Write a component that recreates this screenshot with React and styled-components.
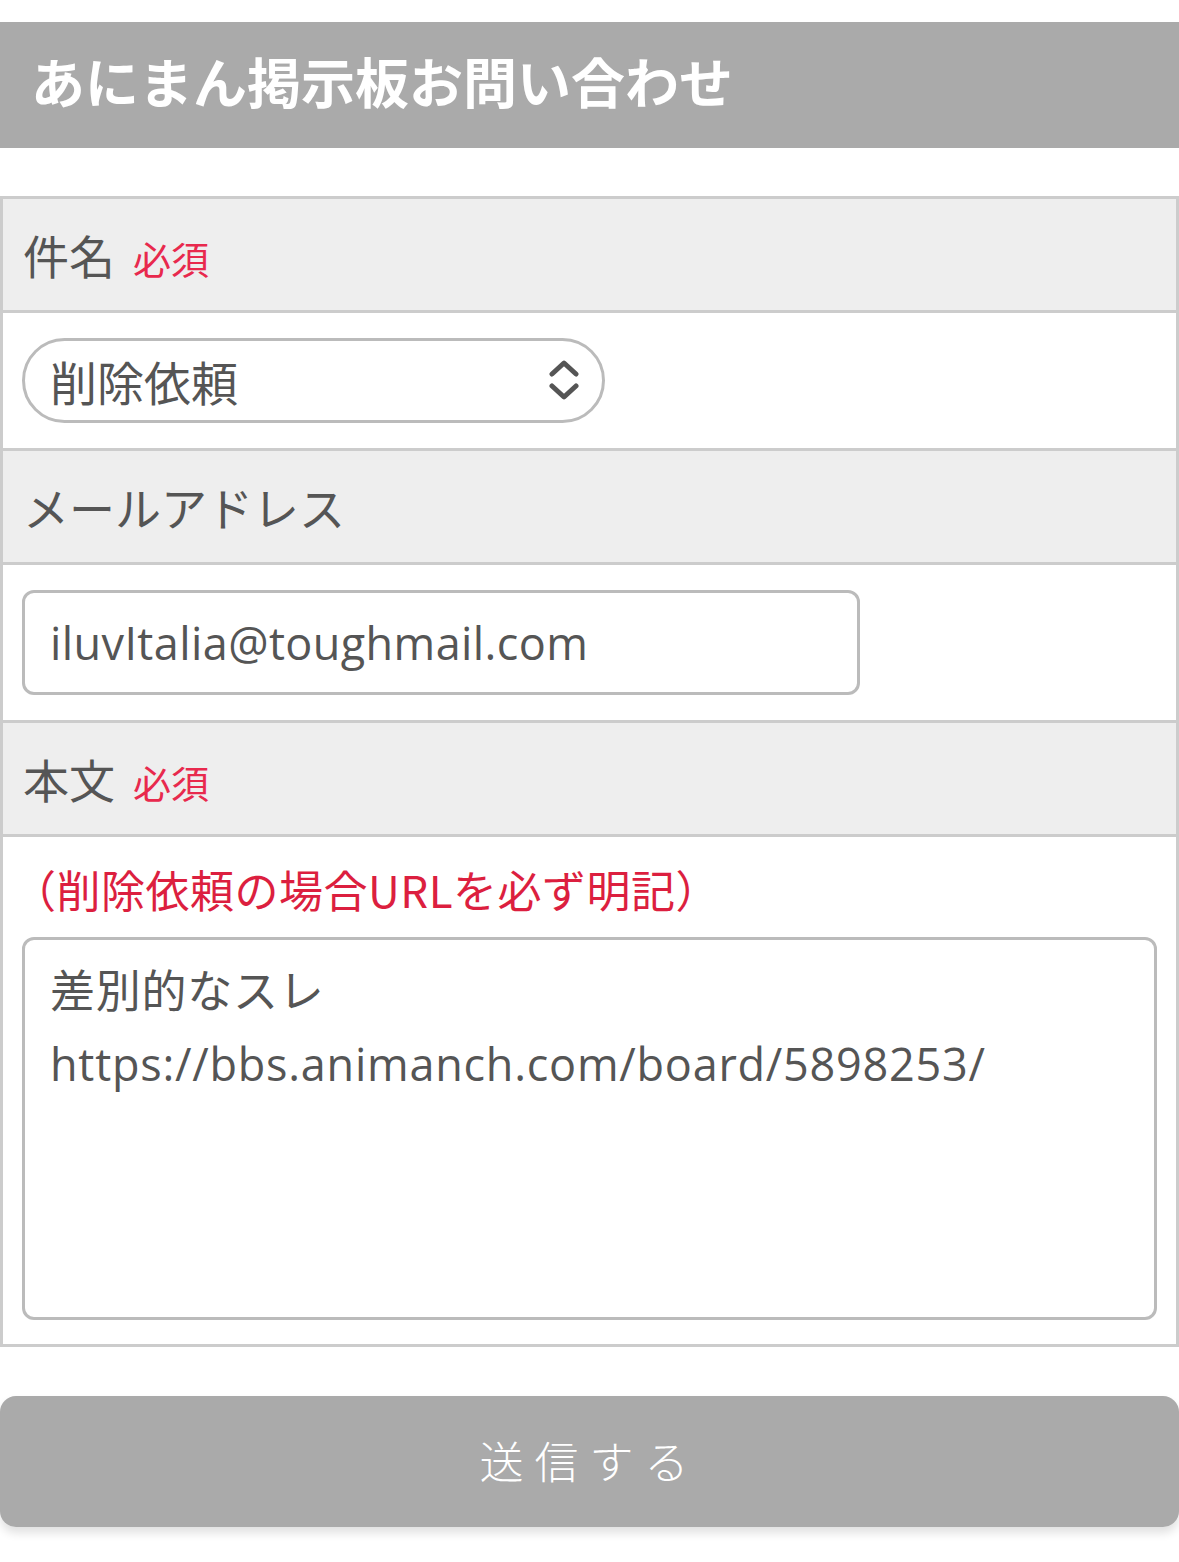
import React from 'react';
import styled, { createGlobalStyle } from 'styled-components';

const GlobalStyle = createGlobalStyle`
  html, body {
    margin: 0;
    padding: 0;
    background: #fff;
  }
  body {
    font-family: "Open Sans", "Noto Sans CJK JP", sans-serif;
    color: #555;
  }
`;

const Page = styled.div`
  width: 1179px;
  padding-top: 22px;
  padding-bottom: 30px;
`;

const TitleBar = styled.h1`
  margin: 0;
  height: 126px;
  box-sizing: border-box;
  display: flex;
  align-items: center;
  padding: 0 0 10px 31px;
  background: #aaa;
  color: #fff;
  font-family: "Noto Sans CJK JP", sans-serif;
  font-size: 54px;
  font-weight: 700;
`;

const FormTable = styled.div`
  margin-top: 48px;
  border: 3px solid #ccc;
  display: flex;
  flex-direction: column;
`;

const Head = styled.div`
  height: 111px;
  background: #eee;
  display: flex;
  align-items: baseline;
  padding: 0 20px;
  line-height: 111px;
  font-family: "Noto Sans CJK JP", sans-serif;
  font-size: 46px;
  color: #555;
  border-bottom: 3px solid #ccc;
`;

const Required = styled.span`
  margin-left: 18px;
  font-size: 38px;
  color: #e8294d;
`;

const Body = styled.div`
  background: #fff;
  padding: ${(p) => p.$pad || '25px 19px'};
  border-bottom: ${(p) => (p.$last ? 'none' : '3px solid #ccc')};
`;

const SelectWrap = styled.div`
  position: relative;
  width: 583px;
`;

const Select = styled.select`
  appearance: none;
  -webkit-appearance: none;
  width: 100%;
  height: 85px;
  box-sizing: border-box;
  border: 3px solid #bbb;
  border-radius: 43px;
  background: #fff;
  padding: 0 25px;
  font-family: "Noto Sans CJK JP", sans-serif;
  font-size: 47px;
  color: #555;
  outline: none;
`;

const Chevron = styled.svg`
  position: absolute;
  right: 24px;
  top: 22px;
  width: 34px;
  height: 40px;
  pointer-events: none;
`;

const TextInput = styled.input`
  display: block;
  width: 838px;
  height: 105px;
  box-sizing: border-box;
  border: 3px solid #bbb;
  border-radius: 12px;
  padding: 0 25px;
  font-family: "Open Sans", "Noto Sans CJK JP", sans-serif;
  font-size: 45px;
  letter-spacing: 0.4px;
  color: #555;
  outline: none;
`;

const Note = styled.p`
  margin: 0 0 20px -10px;
  height: 56px;
  line-height: 56px;
  font-family: "Noto Sans CJK JP", sans-serif;
  font-size: 44px;
  color: #dc1f3f;
  letter-spacing: 0.5px;
  white-space: nowrap;
`;

const TextArea = styled.textarea`
  display: block;
  width: 1135px;
  height: 383px;
  box-sizing: border-box;
  border: 3px solid #bbb;
  border-radius: 12px;
  padding: 14px 25px;
  font-family: "Open Sans", "Noto Sans CJK JP", sans-serif;
  font-size: 45px;
  line-height: 73px;
  letter-spacing: 0.75px;
  color: #555;
  resize: none;
  outline: none;
`;

const SubmitButton = styled.button`
  display: block;
  margin-top: 49px;
  width: 100%;
  height: 131px;
  border: none;
  border-radius: 16px;
  background: #aaa;
  color: #fff;
  font-family: "Noto Sans CJK JP", sans-serif;
  font-size: 44px;
  font-weight: 300;
  letter-spacing: 11px;
  padding-bottom: 4px;
  box-shadow: 0 6px 10px rgba(0, 0, 0, 0.12);
`;

export default function App() {
  return (
    <>
      <GlobalStyle />
      <Page>
        <TitleBar>あにまん掲示板お問い合わせ</TitleBar>
        <FormTable>
          <Head>
            件名<Required>必須</Required>
          </Head>
          <Body>
            <SelectWrap>
              <Select defaultValue="delete">
                <option value="delete">削除依頼</option>
                <option value="other">その他</option>
              </Select>
              <Chevron viewBox="0 0 34 40">
                <path
                  d="M5 14 L17 3 L29 14 M5 26 L17 37 L29 26"
                  fill="none"
                  stroke="#555"
                  strokeWidth="5"
                  strokeLinecap="round"
                  strokeLinejoin="round"
                />
              </Chevron>
            </SelectWrap>
          </Body>
          <Head>メールアドレス</Head>
          <Body>
            <TextInput type="email" defaultValue="iluvItalia@toughmail.com" />
          </Body>
          <Head>
            本文<Required>必須</Required>
          </Head>
          <Body $pad="24px 19px 24px 19px" $last>
            <Note>（削除依頼の場合URLを必ず明記）</Note>
            <TextArea
              readOnly
              defaultValue={'差別的なスレ\nhttps://bbs.animanch.com/board/5898253/'}
            />
          </Body>
        </FormTable>
        <SubmitButton type="button">送信する</SubmitButton>
      </Page>
    </>
  );
}
